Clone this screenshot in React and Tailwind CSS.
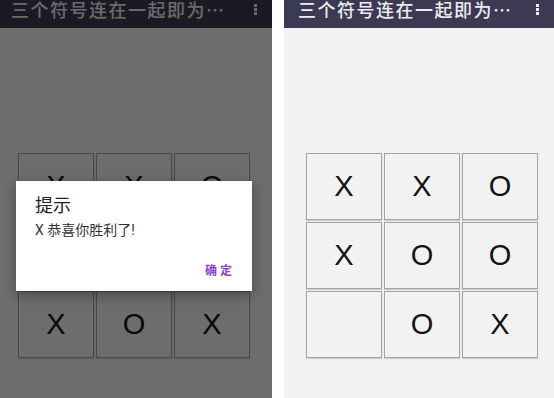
import React from 'react';

const cjk = { fontFamily: 'Roboto, "Noto Sans CJK SC", sans-serif' };

// two boards: left is the finished game (behind the dialog), right is in progress
const finished = ['X', 'X', 'O', 'X', 'O', 'O', 'X', 'O', 'X'];
const playing = ['X', 'X', 'O', 'X', 'O', 'O', '', 'O', 'X'];

const Header = ({ pad }) => (
  <div className={`h-[28px] bg-[#3b3a52] flex items-start justify-between ${pad} pr-[15px]`}>
    <span className="text-[18px] leading-none pt-[2px] tracking-[1.5px] font-medium text-[#ececf2]" style={cjk}>
      三个符号连在一起即为⋯
    </span>
    <div className="flex flex-col gap-[1px] pt-[4px]">
      <span className="w-[3px] h-[3px] bg-[#ececf2]" />
      <span className="w-[3px] h-[3px] bg-[#ececf2]" />
      <span className="w-[3px] h-[3px] bg-[#ececf2]" />
    </div>
  </div>
);

const Board = ({ cells }) => (
  <div className="grid grid-cols-[76px_76px_76px] grid-rows-[67px_67px_67px] gap-[2px]">
    {cells.map((c, i) => (
      <div
        key={i}
        className="border border-[#a3a3a3] bg-[#f2f2f2] shadow-[0_1px_1px_rgba(0,0,0,0.15)] flex items-center justify-center text-[29px] text-[#141414]"
        style={{ fontFamily: '"Liberation Sans", Arial, sans-serif' }}
      >
        {c}
      </div>
    ))}
  </div>
);

export default function App() {
  return (
    <div className="w-[554px] h-[398px] bg-white flex overflow-hidden">
      {/* left phone: game over with dialog */}
      <div className="relative w-[272px] h-full flex flex-col bg-[#f2f2f2]">
        <Header pad="pl-[11px]" />
        <div className="flex-1 pl-[18px] pt-[125px]">
          <Board cells={finished} />
        </div>
        <div className="absolute inset-0 bg-black/55" />
        <div className="absolute left-[16px] top-[181px] w-[236px] h-[110px] bg-white shadow-[0_4px_12px_rgba(0,0,0,0.35)] flex flex-col pl-[19px] pr-[17px]" style={cjk}>
          <div className="text-[18px] leading-none text-[#222] pt-[16px]">提示</div>
          <div className="text-[14px] leading-none text-[#333] pt-[8px]">X 恭喜你胜利了!</div>
          <div className="flex justify-end pt-[28px]">
            <span className="text-[12px] leading-none font-bold tracking-[3px] text-[#8a3fd1]">确定</span>
          </div>
        </div>
      </div>

      <div className="w-[12px] bg-white" />

      {/* right phone: game in progress */}
      <div className="w-[270px] h-full flex flex-col bg-[#f2f2f2]">
        <Header pad="pl-[14px]" />
        <div className="flex-1 pl-[22px] pt-[125px]">
          <Board cells={playing} />
        </div>
      </div>
    </div>
  );
}
